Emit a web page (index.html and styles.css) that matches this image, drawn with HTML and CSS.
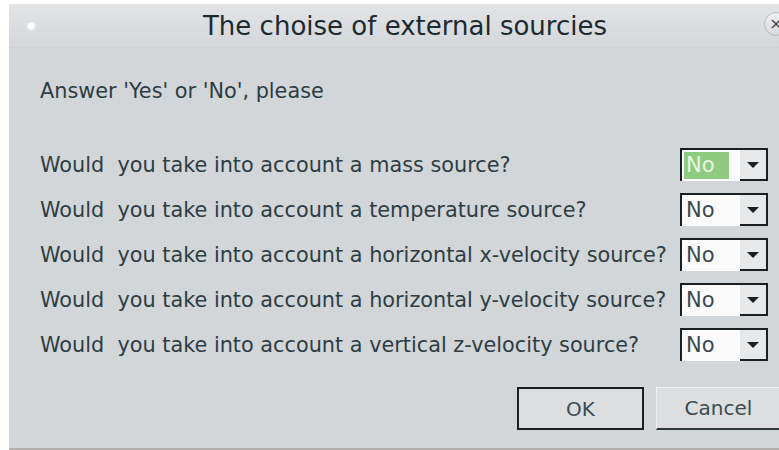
FILE: index.html
```html
<!DOCTYPE html>
<html>
<head>
<meta charset="utf-8">
<link rel="stylesheet" href="styles.css">
</head>
<body>
<div class="window">
  <div class="titlebar">
    <span class="dot"></span>
    <span class="title">The choise of external sourcies</span>
    <span class="close">×</span>
  </div>
  <div class="content">
    <p class="prompt">Answer 'Yes' or 'No', please</p>
    <div class="rows">
      <div class="row">
        <span class="label">Would&nbsp; you take into account a mass source?</span>
        <span class="combo"><span class="field"><span class="value selected">No</span></span><span class="arrow"></span></span>
      </div>
      <div class="row">
        <span class="label">Would&nbsp; you take into account a temperature source?</span>
        <span class="combo"><span class="field"><span class="value">No</span></span><span class="arrow"></span></span>
      </div>
      <div class="row">
        <span class="label">Would&nbsp; you take into account a horizontal x-velocity source?</span>
        <span class="combo"><span class="field"><span class="value">No</span></span><span class="arrow"></span></span>
      </div>
      <div class="row">
        <span class="label">Would&nbsp; you take into account a horizontal y-velocity source?</span>
        <span class="combo"><span class="field"><span class="value">No</span></span><span class="arrow"></span></span>
      </div>
      <div class="row">
        <span class="label">Would&nbsp; you take into account a vertical z-velocity source?</span>
        <span class="combo"><span class="field"><span class="value">No</span></span><span class="arrow"></span></span>
      </div>
    </div>
    <div class="buttons">
      <button class="btn default">OK</button>
      <button class="btn">Cancel</button>
    </div>
  </div>
</div>
</body>
</html>
```

FILE: styles.css
```css
html, body {
  margin: 0;
  padding: 0;
  background: #ffffff;
  overflow: hidden;
  width: 779px;
  height: 450px;
}

.window {
  margin: 4px 0 0 9px;
  width: 792px;
  height: 446px;
  background: #d3d6d9;
  border-bottom: 2px solid #b3afad;
  box-sizing: border-box;
  font-family: "DejaVu Sans", sans-serif;
  color: #2c3d43;
  display: flex;
  flex-direction: column;
}

.titlebar {
  height: 43px;
  flex: none;
  display: flex;
  align-items: center;
  justify-content: center;
  position: relative;
  background: linear-gradient(#e2e4e6, #d4d7da);
  border-bottom: 1px solid #cfd2d5;
}

.title {
  font-size: 26px;
  color: #1c2a30;
  margin-top: 1px;
}

.dot {
  position: absolute;
  left: 18px;
  top: 18px;
  width: 9px;
  height: 9px;
  border-radius: 50%;
  background: radial-gradient(circle at 45% 40%, #ffffff 35%, #dcdde0 80%);
}

.close {
  position: absolute;
  left: 755px;
  top: 8px;
  width: 22px;
  height: 22px;
  border-radius: 50%;
  border: 1px solid #b7bcc0;
  background: linear-gradient(#eef0f1, #d8dbde);
  font-size: 16px;
  line-height: 21px;
  text-align: center;
  color: #3a4a50;
}

.content {
  flex: 1;
  padding: 0 0 0 31px;
  display: flex;
  flex-direction: column;
}

.prompt {
  margin: 30px 0 0;
  font-size: 20.8px;
  line-height: 26px;
}

.rows {
  margin-top: 44px;
  display: flex;
  flex-direction: column;
  gap: 12px;
}

.row {
  display: flex;
  align-items: center;
  height: 33px;
  font-size: 20.8px;
}

.label {
  width: 640px;
  flex: none;
  white-space: nowrap;
}

.combo {
  width: 84px;
  height: 31px;
  display: flex;
  border-top: 2px solid #1a1f22;
  border-left: 2px solid #1a1f22;
  border-right: 2px solid #1a1f22;
  box-sizing: content-box;
  background: #ffffff;
}

.field {
  flex: 1;
  display: flex;
  align-items: center;
  padding: 2px 0 2px 2px;
  background: #fbfbfb;
}

.value {
  font-family: "DejaVu Sans", sans-serif;
  font-size: 21px;
  padding: 0 14px 0 2px;
  line-height: 27px;
  color: #37494f;
}

.value.selected {
  background: #8ecb80;
  color: #e8f5e4;
}

.arrow {
  width: 26px;
  flex: none;
  background: #e6e8ea;
  border-bottom: 2px solid #1a1f22;
  display: flex;
  align-items: center;
  justify-content: center;
}

.arrow::after {
  content: "";
  border-left: 6px solid transparent;
  border-right: 6px solid transparent;
  border-top: 6px solid #1a1f22;
}

.buttons {
  margin-top: 26px;
  display: flex;
  gap: 12px;
  padding-left: 477px;
}

.btn {
  height: 43px;
  font-family: "DejaVu Sans", sans-serif;
  font-size: 20px;
  color: #3a4c52;
  background: #dcdee0;
  box-sizing: border-box;
}

.btn.default {
  width: 127px;
  border: 2px solid #1a1f22;
}

.btn:not(.default) {
  width: 125px;
  border: 1px solid #eef0f1;
  border-bottom: 2px solid #30393d;
  border-right: 1px solid #9aa0a4;
}
```
